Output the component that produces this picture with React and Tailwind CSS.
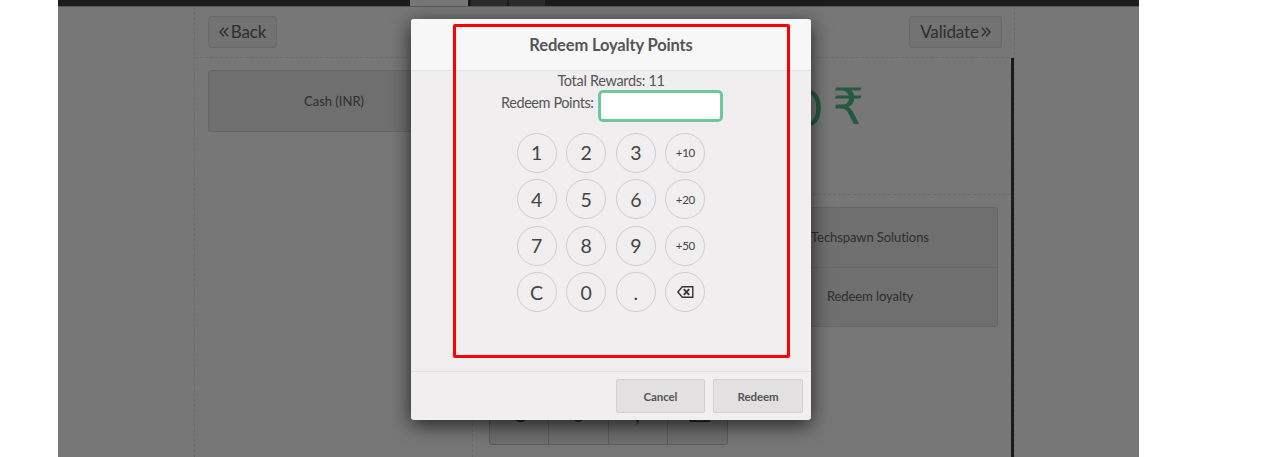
const keys = ['1', '2', '3', '+10', '4', '5', '6', '+20', '7', '8', '9', '+50', 'C', '0', '.', 'back'];

function Chevrons({ flip }) {
  return (
    <svg width="10" height="10" viewBox="0 0 10 10" fill="none" stroke="currentColor" strokeWidth="1.3" className={flip ? 'rotate-180' : ''}>
      <path d="M5 .7 .9 5 5 9.3M9.2 .7 5.1 5l4.1 4.3" />
    </svg>
  );
}

function Backspace() {
  return (
    <svg width="17" height="12" viewBox="0 0 17 12" fill="none" stroke="#333" strokeWidth="1.4">
      <path d="M5.3.8h10.5v10.4H5.3L.9 6z" />
      <path d="m6.8 3.2 5.4 5.6M12.2 3.2 6.8 8.8" strokeWidth="1.9" />
    </svg>
  );
}

function PaymentScreen() {
  return (
    <div className="flex h-[450px] pl-[136px]">
      <div className="flex w-[821px] flex-col border-x border-dashed border-[#6c6c6c]">
        <header className="flex h-[51px] shrink-0 justify-between border-b border-dashed border-[#6c6c6c] pt-[9px] pr-[12px] pl-[13px] text-[17px] tracking-[-0.15px]">
          <button className="flex h-8 w-[69px] items-center justify-center gap-[2px] rounded-[3px] border border-[#696969] bg-[#727272]">
            <Chevrons /><span>Back</span>
          </button>
          <button className="flex h-8 w-[93px] items-center justify-center gap-[2px] rounded-[3px] border border-[#696969] bg-[#727272]">
            <span>Validate</span><Chevrons flip />
          </button>
        </header>
        <div className="flex min-h-0 flex-1">
          <section className="w-[278px] shrink-0 border-r border-dashed border-[#6c6c6c] pt-[12px] pl-[13px]">
            <div className="flex h-[62px] w-[252px] items-center justify-center rounded-[3px] border border-[#666] bg-[#6f6f6f] pt-px text-[13px]">Cash (INR)</div>
          </section>
          <section className="min-w-0 flex-1">
            <div className="flex h-[137px] justify-end border-b border-dashed border-[#6c6c6c] pt-[11px] pr-[147px] text-[50px] leading-[76px] text-[#235a40]">
              <span>0</span>
              <span className="ml-[10px] font-['DejaVu_Sans',sans-serif]">₹</span>
            </div>
            <div className="flex justify-between pt-[12px] pr-[13px] pl-[16px]">
              <div className="mt-[-1px] flex h-[239px] w-[239px] items-end rounded-[3px] border border-[#5c5c5c] bg-[#6f6f6f] text-[20px]">
                <div className="grid h-[60px] w-full grid-cols-4 divide-x divide-[#5c5c5c]">
                  {['C', '0', ',', '⌫'].map((k) => (
                    <span key={k} className="flex items-center justify-center text-[#222]">{k}</span>
                  ))}
                </div>
              </div>
              <div className="h-[120px] w-[257px] rounded-[3px] border border-[#666] bg-[#6f6f6f] text-[13px] tracking-[-0.08px] [font-variant-ligatures:none]">
                <div className="flex h-[60px] items-center justify-center border-b border-[#666] pl-px">Techspawn Solutions</div>
                <div className="flex h-[58px] items-center justify-center pl-px">Redeem loyalty</div>
              </div>
            </div>
          </section>
          <div className="h-[399px] w-[3px] bg-[#1c1c1c]" />
        </div>
      </div>
    </div>
  );
}

function RedeemDialog() {
  return (
    <div className="absolute top-[19px] left-[411px] flex h-[401px] w-[400px] flex-col overflow-hidden rounded-[3px] bg-[#f0eeee] text-[#555] shadow-[0_5px_20px_rgba(0,0,0,0.7)]">
      <h1 className="flex h-[52px] shrink-0 items-center justify-center border-b border-[#e4e2e2] bg-[#f7f7f7] pt-px text-[16.5px] font-bold tracking-[-0.15px]">Redeem Loyalty Points</h1>
      <div className="flex-1">
        <p className="h-[19px] text-center text-[14.5px] leading-[20px] tracking-[-0.32px]">Total Rewards: 11</p>
        <div className="flex pl-[90px]">
          <label className="w-[97px] text-[14.5px] leading-[26px] tracking-[-0.42px]">Redeem Points:</label>
          <input className="h-[32px] w-[125px] rounded-[5px] border-3 border-[#6ec89b] bg-white outline-none" />
        </div>
        <div className="mt-[11px] ml-[105.6px] grid w-[190px] grid-cols-[repeat(4,40px)] gap-x-[9.6px] gap-y-[6.4px]">
          {keys.map((k) => (
            <button key={k} className={`flex h-[40px] w-[40px] items-center justify-center rounded-full border border-[#cfcdcd] text-[#444] ${k.length === 3 ? 'text-[11.5px] tracking-[-0.2px]' : k === 'back' ? 'pb-px' : 'text-[19.5px]'}`}>
              {k === 'back' ? <Backspace /> : k}
            </button>
          ))}
        </div>
      </div>
      <footer className="flex h-[49px] shrink-0 justify-end gap-[8px] border-t border-[#e0dede] pt-[7px] pr-[8px] text-[11.5px] font-bold tracking-[-0.1px]">
        <button className="h-[34px] w-[89px] rounded-[2px] border border-[#d2d0d0] bg-[#e2e0e0] pt-px">Cancel</button>
        <button className="h-[34px] w-[90px] rounded-[2px] border border-[#d2d0d0] bg-[#e2e0e0] pt-px">Redeem</button>
      </footer>
    </div>
  );
}

export default function App() {
  return (
    <div className="relative h-[457px] w-[1261px] overflow-hidden bg-white font-[Lato,sans-serif]">
      <div className="ml-[58px] h-[457px] w-[1081px] overflow-hidden bg-[#777] text-[#2e2e2e]">
        <div className="flex h-[7px] border-b border-[#5a5757] bg-[#1c1c1c] pl-[352px]">
          <div className="w-[58px] bg-[#777]" />
          <div className="ml-[3px] w-[36px] bg-[#2c2c2c]" />
          <div className="ml-[2px] w-[36px] bg-[#2c2c2c]" />
        </div>
        <PaymentScreen />
      </div>
      <RedeemDialog />
      <div className="pointer-events-none absolute top-[24px] left-[453px] h-[334px] w-[337px] rounded-[2px] border-3 border-[#f00]" />
    </div>
  );
}
